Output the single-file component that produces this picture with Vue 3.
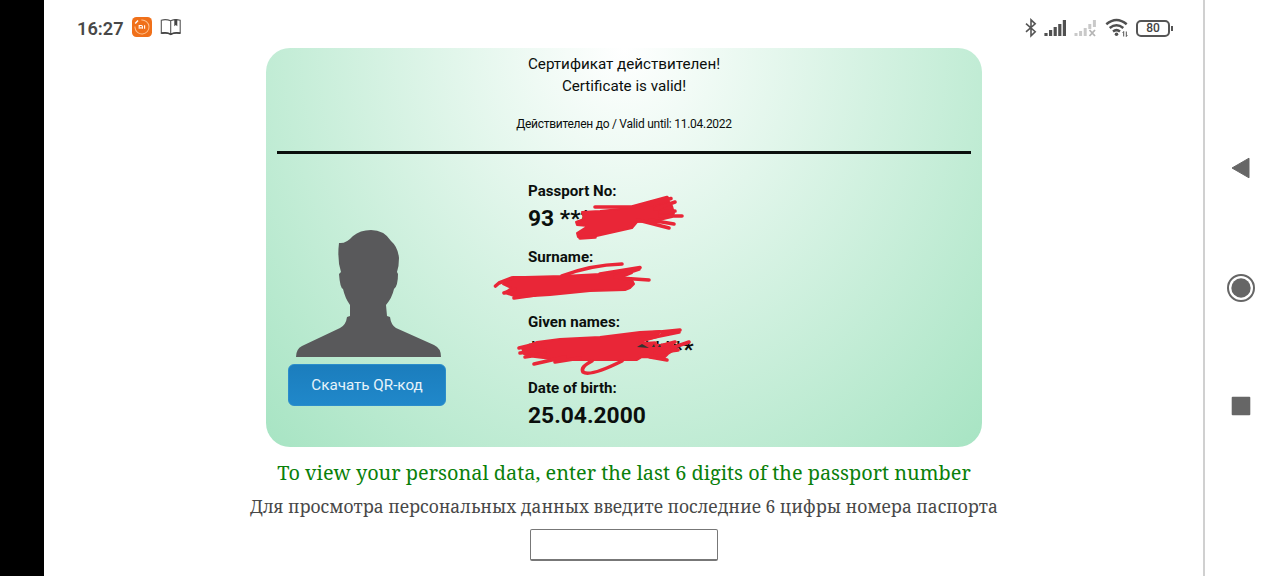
<template>
  <div class="phone">
    <div class="cutout"></div>

    <main class="screen">
      <header class="status-bar">
        <div class="status-left">
          <span class="clock">16:27</span>
          <svg class="mi-icon" width="20" height="20" viewBox="0 0 20 20">
            <rect width="20" height="20" rx="4.5" fill="#f0701a" />
            <circle cx="10" cy="10" r="7" fill="none" stroke="#ffc08c" stroke-width="1" stroke-dasharray="34 10" transform="rotate(-95 10 10)" />
            <path d="M3.2 6.4L6 3.6" stroke="#fff" stroke-width="1.4" />
            <path d="M7.2 11.8V8.5h2.2q1 0 1 1v2.3M8.9 9.9v1.9M12.6 8.3v3.5" fill="none" stroke="#fff" stroke-width="1.1" />
          </svg>
          <svg class="book-icon" width="22" height="18" viewBox="0 0 22 18">
            <path d="M1.3 2.2Q6 .8 10.6 2.8Q15 .8 20.2 2.2V15.2Q14.5 14 10.8 16.2Q7 14 1.3 15.2ZM10.7 3v12.5" fill="none" stroke="#555" stroke-width="1.1" />
            <path d="M1.3 15.2Q7 14 10.8 16.2Q14.5 14 20.2 15.2" fill="none" stroke="#444" stroke-width="1.7" />
            <path d="M14.3 1.2h3v7l-1.5-1.3l-1.5 1.3z" fill="#444" />
          </svg>
        </div>
        <div class="status-right">
          <svg width="12" height="20" viewBox="0 0 12 20">
            <path d="M1 5.7l9.2 8L6 17.8V1.8l4.2 4L1 13.9" fill="none" stroke="#555" stroke-width="1.6" />
          </svg>
          <svg class="signal" width="23" height="18" viewBox="0 0 23 18">
            <path v-for="(h, i) in bars" :key="i" :d="`M${i * 4.6 + 2} 17v-${h}`" stroke="#505050" stroke-width="3.2" />
          </svg>
          <svg class="signal-off" width="23" height="18" viewBox="0 0 23 18">
            <path d="M2 17v-3M6.6 17v-5M11.2 17v-8M15.8 10v-5M20.4 8v-7" stroke="#c9c9c9" stroke-width="3" />
            <path d="M15.5 11l5.5 6m0-6l-5.5 6" stroke="#b5b5b5" stroke-width="1.8" />
          </svg>
          <svg class="wifi" width="24" height="20" viewBox="0 0 24 20">
            <path d="M1.3 6.2Q11.5-2.2 21.7 6.2M4.7 10Q11.5 4.5 18.3 10M8 13.5Q11.5 10.8 15 13.5" fill="none" stroke="#505050" stroke-width="2.5" />
            <circle cx="11.5" cy="16.2" r="1.8" fill="#505050" />
            <path d="M18.7 18.5v-5l-1 1.2M21.3 13.5v5l1-1.2" fill="none" stroke="#505050" stroke-width="1" />
          </svg>
          <div class="battery">80</div>
        </div>
      </header>

      <section class="certificate">
        <div class="cert-head">
          <div class="cert-title">Сертификат действителен!</div>
          <div class="cert-title">Certificate is valid!</div>
          <div class="cert-until">Действителен до / Valid until: 11.04.2022</div>
        </div>

        <div class="cert-body">
          <div class="photo">
            <svg class="avatar" width="146" height="128" viewBox="0 0 146 128">
              <path
                d="M0 127Q0 119 6 116L44 98Q50 95 51 87L54 86V75Q49 68 47 59Q44 58 43 44L45 42Q41 30 43 13Q50 14 57 6Q64 0 75 0Q88 0 95 11Q102 17 103 28Q103 36 101 42L102 44Q102 56 98 59Q96 68 90 75L91 86L94 87Q95 95 100 98L138 115Q145 118 145 127Z"
                fill="#59595b"
              />
            </svg>
            <button class="qr-btn">Скачать QR-код</button>
          </div>

          <dl class="fields">
            <div v-for="field in fields" :key="field.label" class="field">
              <dt>{{ field.label }}</dt>
              <dd>{{ field.value }}</dd>
            </div>
          </dl>
        </div>

        <!-- marker strokes over the personal data -->
        <svg class="marker" width="240" height="190" viewBox="480 190 240 190">
          <g fill="#e92637" stroke="#e92637" stroke-width="2" stroke-linejoin="round" stroke-linecap="round">
            <path d="M582 212L600 211L630 208L650 202L667 199L670 203L672 206L674 213L672 217L655 221L637 222L632 228L592 237L578 237L577 233L588 226L577 225L576 222L584 219Z" />
            <path d="M595 207H631M632 207L667 197.500M650 205L671 198.500M655 209L675 202M660 212L675 211M660 216L682 216M650 220L674 224M638 220L669 228M580 238L595 237" fill="none" stroke-width="3.6" />
            <path d="M513 277L525 277L563 276L600 274L632 269L632 273L622 277L632 280L634 284L630 288L625 290L590 291L550 295L517 297L505 293L511 288L503 284Z" />
            <path d="M562 276Q590 265 622 264M600 274L640 267.500M615 277L639 269M620 278L649 280M512 278L499 283L495.500 286M515 289L504 293M514 298L535 295" fill="none" stroke-width="3.6" />
            <path d="M537 342L560 339L600 337L640 332L660 331L657 337L637 343L660 345L672 344L676 349L668 354L664 358L642 357L637 360L560 360L535 357L524 354L522 348Z" />
            <path d="M519 348L540 343M520 353L545 350M525 357L545 354M534 364L565 357M555 362L580 358M622 361Q590 377 583 372Q580 367 592 361M640 334L680 330M640 340L679 332M640 344L655 343M660 346L675 342M660 352L689 342M655 353L678 350M650 357L667 360" fill="none" stroke-width="3.6" />
          </g>
          <path d="M637 347L642 344L649 348ZM652 347l2-3l1 3zM658 347l2-3l1 3z" fill="#31342f" />
        </svg>
      </section>

      <section class="prompt">
        <p class="prompt-en">To view your personal data, enter the last 6 digits of the passport number</p>
        <p class="prompt-ru">Для просмотра персональных данных введите последние 6 цифры номера паспорта</p>
        <input v-model="digits" class="prompt-input" type="text" maxlength="6" />
      </section>
    </main>

    <nav class="nav-bar">
      <svg width="20" height="24" viewBox="0 0 20 24">
        <path d="M1 12L18 2.2V21.8Z" fill="#666" stroke="#666" stroke-linejoin="round" />
      </svg>
      <svg width="30" height="30" viewBox="0 0 30 30">
        <circle cx="15" cy="15" r="13" fill="none" stroke="#666" stroke-width="2" />
        <circle cx="15" cy="15" r="9.7" fill="#666" />
      </svg>
      <svg width="20" height="20" viewBox="0 0 20 20">
        <rect x=".7" y=".7" width="18.6" height="18.6" rx="1" fill="#666" />
      </svg>
    </nav>
  </div>
</template>

<script setup>
import { ref } from 'vue'

const digits = ref('')
const bars = [3, 6, 9, 12, 16]

const fields = [
  { label: 'Passport No:', value: '93 ***' },
  { label: 'Surname:', value: '' },
  { label: 'Given names:', value: '****************' },
  { label: 'Date of birth:', value: '25.04.2000' }
]
</script>

<style>
body {
  margin: 0;
  background: #fff;
}
</style>

<style scoped>
.phone {
  display: flex;
  width: 1280px;
  height: 576px;
  overflow: hidden;
  font-family: Roboto, sans-serif;
  color: #0b0f0d;
}

.cutout {
  width: 44px;
  background: #000;
}

.screen {
  width: 1159px;
  display: flex;
  flex-direction: column;
  align-items: center;
}

.status-bar {
  box-sizing: border-box;
  width: 100%;
  height: 48px;
  padding: 8px 29px 0 33px;
  display: flex;
  justify-content: space-between;
}

.status-left,
.status-right {
  display: flex;
  align-items: center;
  height: 40px;
}

.clock {
  font-size: 18.2px;
  font-weight: 600;
  color: #484848;
  width: 55px;
}

.mi-icon {
  margin-top: -2px;
}

.book-icon {
  margin-left: 8px;
  margin-top: -2px;
}

.signal {
  margin-left: 7px;
}

.signal-off {
  margin-left: 7px;
}

.wifi {
  margin-left: 8px;
}

.battery {
  position: relative;
  box-sizing: border-box;
  width: 34px;
  height: 17px;
  margin-left: 7px;
  margin-right: 4px;
  border: 2px solid #555;
  border-radius: 5px;
  font-size: 12px;
  font-weight: 500;
  line-height: 13px;
  text-align: center;
  color: #444;
}

.battery::after {
  content: '';
  position: absolute;
  right: -5px;
  top: 4px;
  width: 2px;
  height: 5px;
  background: #555;
}

.certificate {
  position: relative;
  box-sizing: border-box;
  width: 716px;
  height: 399px;
  margin-left: 1px;
  padding: 5px 11px 0;
  border-radius: 24px;
  background: radial-gradient(ellipse at 50% 0, #fff, #a7e4c3);
}

.cert-head {
  height: 98px;
  border-bottom: 3px solid #0b0f0d;
  text-align: center;
}

.cert-title {
  font-size: 15.2px;
  line-height: 22px;
}

.cert-until {
  margin-top: 14px;
  font-size: 12px;
  letter-spacing: -0.27px;
  line-height: 26px;
}

.cert-body {
  display: flex;
}

.photo {
  width: 170px;
  padding: 76px 0 0 11px;
  box-sizing: border-box;
}

.avatar {
  display: block;
  margin-left: 8px;
}

.qr-btn {
  display: block;
  box-sizing: border-box;
  width: 158px;
  height: 42px;
  margin-top: 6px;
  padding: 0 0 1px;
  border: 1px solid #2b8dcb;
  border-radius: 6px;
  background: linear-gradient(#1b7dbd, #2088ca);
  color: #e6f3fa;
  font-family: inherit;
  font-size: 15.2px;
}

.fields {
  margin: 25px 0 0 81px;
}

.field {
  height: 65.6px;
}

dt {
  font-size: 15.1px;
  font-weight: 700;
  line-height: 24px;
}

dd {
  margin: 0;
  font-size: 22.8px;
  font-weight: 700;
  line-height: 32px;
}

.marker {
  position: absolute;
  left: 214px;
  top: 142px;
}

.prompt {
  display: flex;
  flex-direction: column;
  align-items: center;
  margin-left: 1px;
  font-family: 'Noto Serif', 'DejaVu Serif Condensed', 'DejaVu Serif', serif;
  white-space: nowrap;
}

.prompt-en {
  margin: 10px 0 0;
  font-size: 19.9px;
  line-height: 32px;
  color: #0a800a;
}

.prompt-ru {
  margin: 3px 0 0;
  font-size: 17.4px;
  line-height: 28px;
  color: #484848;
}

.prompt-input {
  box-sizing: border-box;
  width: 188px;
  height: 32px;
  margin-top: 9px;
  border: 1px solid #777;
  border-bottom-width: 2px;
  border-radius: 2px;
  background: #fff;
}

.nav-bar {
  box-sizing: border-box;
  width: 77px;
  border-left: 2px solid #d0d0d0;
  padding: 156px 4px 0 0;
  display: flex;
  flex-direction: column;
  align-items: center;
  gap: 93px;
}
</style>
